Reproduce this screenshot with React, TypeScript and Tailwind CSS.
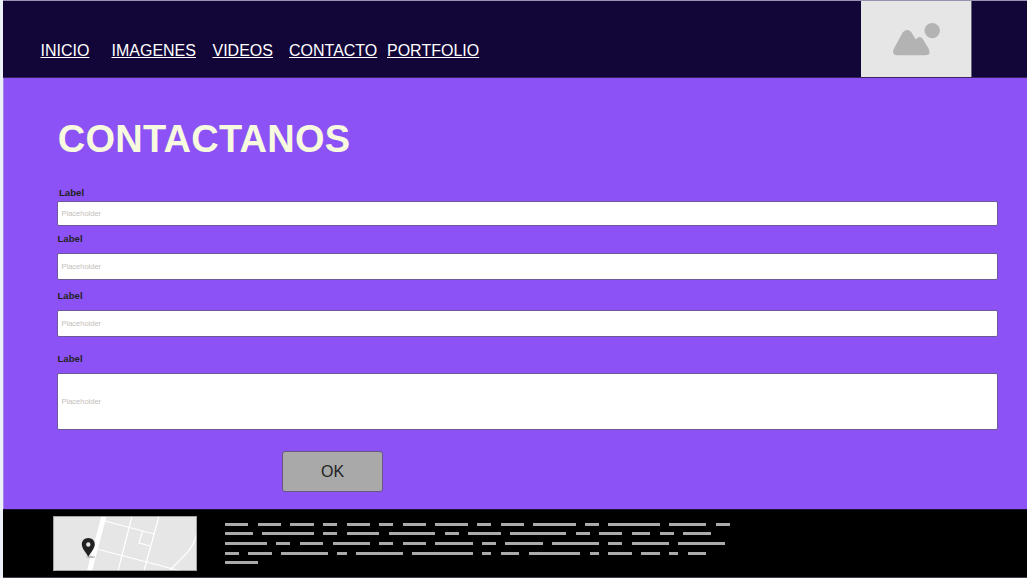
const links = [
  { text: 'INICIO', box: 'ml-[37.5px] w-[71px]' },
  { text: 'IMAGENES', box: 'w-[101px]' },
  { text: 'VIDEOS', box: 'w-[76.5px]' },
  { text: 'CONTACTO', box: 'w-[98px]' },
  { text: 'PORTFOLIO', box: '' },
];

const fields = [
  { label: 'pl-[2px] mt-[26px]', box: 'mt-[1px] h-[25px]' },
  { label: 'pl-[0.5px] mt-[6px]', box: 'mt-[7px] h-[27px]' },
  { label: 'pl-[0.5px] mt-[9px]', box: 'mt-[7px] h-[27px]' },
  { label: 'pl-[0.5px] mt-[15px]', box: 'mt-[7px] h-[57px]' },
];

// Word lengths of the placeholder paragraph, one list per line.
const lines = [
  { gap: '', words: [5, 5, 5, 3, 5, 3, 5, 7, 3, 5, 9, 3, 11, 8, 3] },
  { gap: 'mt-[6px]', words: [6, 11, 3, 7, 10, 3, 7, 12, 3, 5, 4, 3, 6] },
  { gap: 'mt-[7px]', words: [9, 3, 5, 8, 3, 5, 8, 3, 8, 10, 3, 8, 10] },
  { gap: 'mt-[7px]', words: [3, 5, 10, 2, 10, 13, 2, 4, 11, 2, 5, 4, 2, 4] },
  { gap: 'mt-[6px]', words: [7] },
];
const CHAR = 4.676;

function Logo() {
  return (
    <svg className="block h-[76px] w-[110px]" viewBox="0 0 110 76">
      <circle cx="71.2" cy="29.6" r="7.7" fill="#b3b3b3" />
      <path
        d="M33 47.500 L40.300 34 C43 28 48.500 27 51.500 33 L53.800 37 Q55 38.800 56.500 36.900 Q59 34.700 61.500 37.500 L67.500 47.500 Q71 54.300 64 54.300 H36.500 Q29.500 54 33 47.500Z"
        fill="#b3b3b3"
      />
    </svg>
  );
}

function Map() {
  return (
    <svg className="block h-[55px] w-[144px]" viewBox="0 0 144 55">
      <rect width="144" height="55" fill="#e6e6e6" />
      <g fill="none" stroke="#fff" strokeWidth="1.2">
        <path d="M51 0 L36.500 55" strokeWidth="5" />
        <path d="M52 5 L101 18 M44 33 L128 55 M79 0 L65 55 M106 0 L91 55" />
        <path d="M89.500 15 L86 27 L97.500 30" />
        <path d="M144 18 Q141 31 129 42 L117 54" />
        <path d="M0 53.500 L4 55" />
      </g>
      <ellipse cx="37.500" cy="41" rx="4.500" ry="1" fill="#bdbdbd" />
      <path
        fillRule="evenodd"
        d="M35.300 22 C31.500 22 28.800 24.800 28.800 28.300 C28.800 32.500 33 36.500 35.300 40.800 C37.600 36.500 41.800 32.500 41.800 28.300 C41.800 24.800 39.100 22 35.300 22Z M35.300 26.300 A2.200 2.200 0 1 1 35.300 30.700 A2.200 2.200 0 1 1 35.300 26.300Z"
        fill="#222"
      />
      <rect x=".5" y=".5" width="143" height="54" fill="none" stroke="#777" strokeOpacity=".6" />
    </svg>
  );
}

export default function App() {
  return (
    <div className="h-[578px] w-[1027px] overflow-hidden bg-[#edf1fa] pl-[3px] font-['Liberation_Sans',Arial,sans-serif]">
      <div className="flex h-full flex-col bg-[#8c52f5]">
        <header className="flex h-[78px] shrink-0 border-y border-t-[#9a91b5] border-b-[#38245f] bg-[#120638]">
          <nav className="flex grow pt-[38px] text-base leading-6 text-white">
            {links.map((l) => (
              <div key={l.text} className={l.box}>
                <a className="underline decoration-1 underline-offset-1">{l.text}</a>
              </div>
            ))}
          </nav>
          <div className="mr-[55px] h-[76px] w-[111px] border-r border-[#69627e] bg-[#e6e6e6]">
            <Logo />
          </div>
        </header>

        <main className="flex h-[431px] shrink-0 flex-col border-l border-[#a783e8] pr-[29px] pl-[53px]">
          <h1 className="mt-[40px] h-[42px] pl-[0.7px] text-[38px] leading-[42px] font-bold tracking-[0.25px] text-[#f7fade]">
            CONTACTANOS
          </h1>
          {fields.map((f, i) => (
            <div key={i} className="flex flex-col">
              <label className={`h-[14px] text-[9.6px] leading-[14px] font-bold text-[#222] ${f.label}`}>Label</label>
              <div className={`flex items-center rounded-[2px] border border-[#6c5a96] bg-white pl-[3.5px] text-[7.5px] leading-none text-[#c4c0ba] ${f.box}`}>
                Placeholder
              </div>
            </div>
          ))}
          <button className="mt-[21px] ml-[225px] h-[41px] w-[101px] rounded-[3px] border border-[#665783] bg-[#a9a9a9] text-base text-[#222]">
            OK
          </button>
        </main>

        <footer className="flex grow border-y border-t-[#1c1031] border-b-[#44404a] bg-black pt-[6px] pl-[50px]">
          <Map />
          <div className="ml-[28px] pt-[7px]">
            {lines.map((line, i) => (
              <div key={i} className={`flex h-[3px] ${line.gap}`} style={{ columnGap: CHAR * 2 }}>
                {line.words.map((n, j) => (
                  <span key={j} className="h-[3px] shrink-0 bg-[#aaa]" style={{ width: n * CHAR }} />
                ))}
              </div>
            ))}
          </div>
        </footer>
      </div>
    </div>
  );
}
